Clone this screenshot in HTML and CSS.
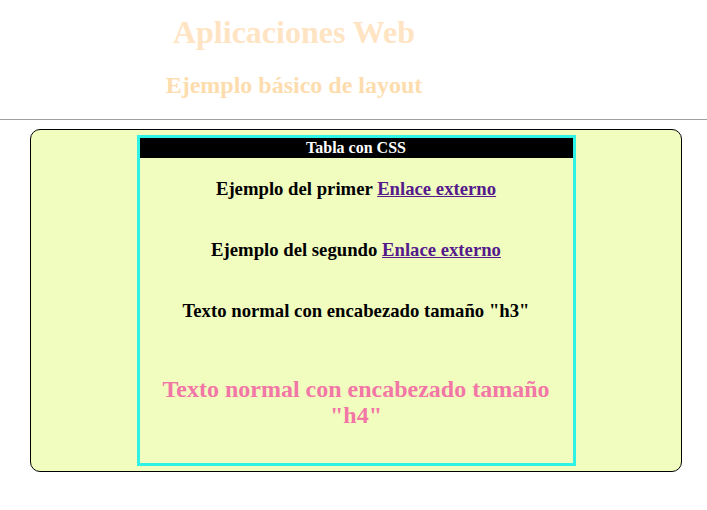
FILE: index.html
```html
<!DOCTYPE html>
<html lang="es">
<head>
<meta charset="utf-8">
<title>Aplicaciones Web</title>
<link rel="stylesheet" href="styles.css">
</head>
<body>
<header class="cabecera">
  <h1 class="titulo">Aplicaciones Web</h1>
  <h2 class="subtitulo">Ejemplo básico de layout</h2>
</header>
<hr class="separador">
<main class="contenedor">
  <table class="tabla">
    <tr><th class="tabla-titulo">Tabla con CSS</th></tr>
    <tr><td class="fila"><h3 class="texto">Ejemplo del primer <a class="enlace" href="#">Enlace externo</a></h3></td></tr>
    <tr><td class="fila"><h3 class="texto">Ejemplo del segundo <a class="enlace" href="#">Enlace externo</a></h3></td></tr>
    <tr><td class="fila"><h3 class="texto">Texto normal con encabezado tamaño "h3"</h3></td></tr>
    <tr><td class="fila fila-alta"><h4 class="texto-rosa">Texto normal con encabezado tamaño "h4"</h4></td></tr>
  </table>
</main>
</body>
</html>
```
FILE: styles.css
```css
html, body {
  margin: 0;
  padding: 0;
  background: #ffffff;
  font-family: "Liberation Serif", "Times New Roman", serif;
}

.cabecera {
  width: 588px;
  text-align: center;
  padding-top: 14px;
  height: 106px;
  box-sizing: border-box;
}

.titulo {
  margin: 0;
  font-size: 32px;
  line-height: 37px;
  font-weight: bold;
  color: #ffe4c4;
}

.subtitulo {
  margin: 20px 0 0;
  font-size: 24px;
  line-height: 28px;
  font-weight: bold;
  color: #fddcae;
}

.separador {
  margin: 13px 0 0;
  border: 0;
  border-top: 1px solid #a0a0a0;
  height: 0;
}

.contenedor {
  margin: 9px 0 0 30px;
  width: 652px;
  box-sizing: border-box;
  border: 1px solid #000000;
  border-radius: 10px;
  background: #f1fdbf;
  padding: 5px 0;
  display: flex;
  justify-content: center;
}

.tabla {
  width: 439px;
  border: 3px solid #2ef2e6;
  border-collapse: collapse;
}

.tabla-titulo {
  background: #000000;
  color: #ffffff;
  font-size: 16px;
  font-weight: bold;
  height: 20px;
  padding: 0;
  line-height: 20px;
}

.fila {
  height: 61px;
  padding: 0 12px;
  text-align: center;
  vertical-align: middle;
}

.fila-alta {
  height: 122px;
}

.texto {
  margin: 0;
  font-size: 18.72px;
  font-weight: bold;
  color: #000000;
}

.enlace {
  color: #551a8b;
}

.texto-rosa {
  margin: 0;
  font-size: 24px;
  font-weight: bold;
  line-height: 26px;
  color: #f277a6;
}
```
